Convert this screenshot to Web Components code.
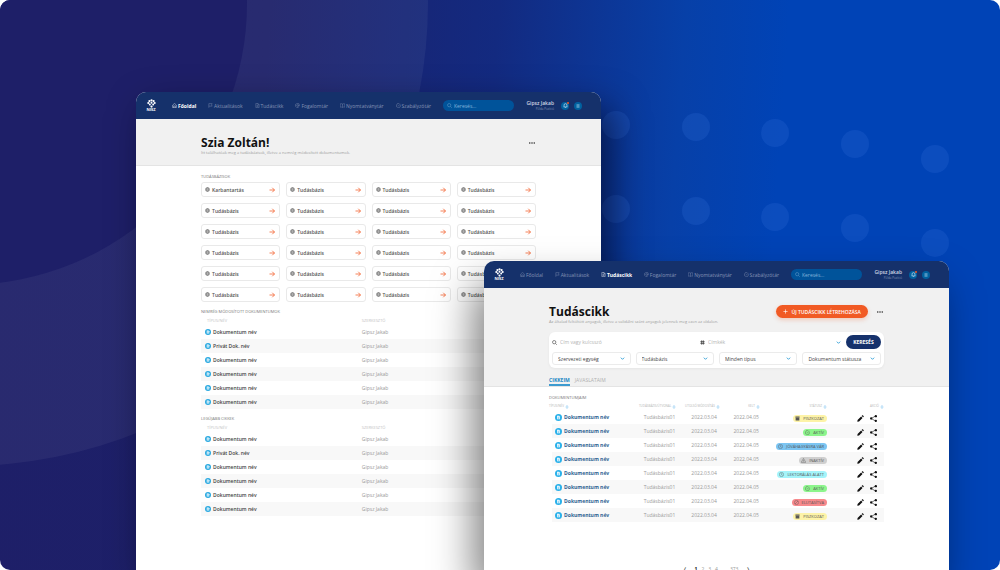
<!DOCTYPE html>
<html lang="hu">
<head>
<meta charset="utf-8">
<meta name="viewport" content="width=device-width, initial-scale=1">
<title>Tudásbázis</title>
<style>
  body {
    margin: 0;
    background: #fff;
    font-family: "Open Sans", "Noto Sans", sans-serif;
    font-size: 5px;
    line-height: 8px;
    color: #555;
  }
</style>
</head>
<body>
<kb-stage>
  <kb-window class="home">
    <kb-header slot="header" current="0"></kb-header>
    <kb-banner slot="banner" heading="Szia Zoltán!" lead="Itt találhatóak meg a tudásbázisok, illetve a nemrég módosított dokumentumok."></kb-banner>
    <kb-section heading="Tudásbázisok"><kb-cards></kb-cards></kb-section>
    <kb-section heading="Nemrég módosított dokumentumok"><kb-documents></kb-documents></kb-section>
    <kb-section heading="Legújabb cikkek"><kb-documents></kb-documents></kb-section>
  </kb-window>
  <kb-window class="articles">
    <kb-header slot="header" current="2"></kb-header>
    <kb-banner slot="banner" heading="Tudáscikk" lead="Az általad feltöltött anyagok, illetve a validálni szánt anyagok jelennek meg ezen az oldalon." action="Új tudáscikk létrehozása">
      <kb-filter></kb-filter>
      <kb-tabs></kb-tabs>
    </kb-banner>
    <kb-section heading="Dokumentumjaim"><kb-articles></kb-articles></kb-section>
    <kb-pager></kb-pager>
  </kb-window>
</kb-stage>

<script>
const icons = {
  logo: `<g fill="currentColor" stroke="none"><circle cx="12" cy="3.500" r="3"/><circle cx="6.500" cy="5.500" r="3"/><circle cx="17.500" cy="5.500" r="3"/><circle cx="3.500" cy="10.500" r="2.800"/><circle cx="20.500" cy="10.500" r="2.800"/><circle cx="12" cy="10" r="2.600"/><circle cx="7.500" cy="14.500" r="2.600"/><circle cx="16.500" cy="14.500" r="2.600"/><circle cx="12" cy="20" r="3"/></g>`,
  home: `<path d="M3 10 12 2l9 8v12H3zM8 22v-8h8v8"/>`,
  flag: `<path d="M4 23V3h16l-3 6 3 6H4"/>`,
  file: `<path d="M4 2h10l6 6v14H4zM14 2v6h6M8 12h8M8 17h8"/>`,
  at: `<circle cx="12" cy="12" r="4"/><path d="M16 8v6c0 3 6 3 6-2a10 10 0 1 0-4 8"/>`,
  book: `<path d="M12 5C9 3 5 3 1 4v16c4-1 8-1 11 1 3-2 7-2 11-1V4c-4-1-8-1-11 1zv16"/>`,
  check: `<path d="M22 10v2a10 10 0 1 1-6-9M22 4 12 14l-4-4"/>`,
  search: `<circle cx="10.500" cy="10.500" r="8"/><path d="m17 17 6 6"/>`,
  bell: `<path d="M5 17V10a7 7 0 0 1 14 0v7l2 2H3zM10 22h4"/>`,
  menu: `<path d="M3 5h18M3 12h18M3 19h18"/>`,
  dots: `<g fill="currentColor" stroke="none"><circle cx="3" cy="12" r="3"/><circle cx="12" cy="12" r="3"/><circle cx="21" cy="12" r="3"/></g>`,
  globe: `<circle cx="12" cy="12" r="10"/><path d="M2 12h20M12 2c-6 6-6 14 0 20M12 2c6 6 6 14 0 20M4 7h16M4 17h16"/>`,
  arrow: `<path d="M2 12h20M13 3l9 9-9 9"/>`,
  doc: `<circle cx="12" cy="12" r="12" fill="currentColor" stroke="none"/><path d="M7 6h7l3 3v9H7z" fill="#fff" stroke="none"/><path d="M9 11h6M9 15h6"/>`,
  plus: `<path d="M12 2v20M2 12h20"/>`,
  chevron: `<path d="m4 8 8 8 8-8"/>`,
  hash: `<path d="M8 2v20M16 2v20M2 8h20M2 16h20"/>`,
  sort: `<path d="m7 8 5-6 5 6zM7 16l5 6 5-6zM7 8v8M17 8v8"/>`,
  box: `<path fill="currentColor" stroke="none" d="M2 2h20v6H2zM3 9h18v13H3z"/>`,
  clock: `<circle cx="12" cy="12" r="10"/><path d="M12 6v7l5 2"/>`,
  warn: `<path d="M12 2 23 21H1zM12 9v6M12 17v2"/>`,
  ban: `<circle cx="12" cy="12" r="10"/><path d="M5 19 19 5"/>`,
  pen: `<path fill="currentColor" stroke="none" d="m1 23 1-6L14 5l5 5L7 22zM16 3l2-2q1-1 2 0l3 3q1 1 0 2l-2 2z"/>`,
  share: `<path d="M20 3 4 12l16 9"/><g fill="currentColor" stroke="none"><circle cx="20" cy="4" r="4"/><circle cx="4" cy="12" r="4"/><circle cx="20" cy="20" r="4"/></g>`,
};

const icon = (name, size = 6, weight = 2) =>
  `<svg class="icon" width="${size}" height="${size}" viewBox="0 0 24 24" fill="none" stroke="currentColor" stroke-width="${weight}" aria-hidden="true">${icons[name]}</svg>`;

const baseStyle = `
  *, *::before, *::after { box-sizing: border-box; }
  :host { display: block; }
  .icon { display: block; flex: none; }
  a { color: inherit; text-decoration: none; }
  button, input, select { font: inherit; color: inherit; border: 0; padding: 0; margin: 0; background: none; min-width: 0; }
  input { outline: none; }
  h1, h2 { margin: 0; }
  table { width: 100%; border-collapse: collapse; table-layout: fixed; }
  th, td { padding: 0; font-weight: 400; text-align: left; white-space: nowrap; }
`;

class KbElement extends HTMLElement {
  connectedCallback() {
    if (this.shadowRoot) return;
    this.attachShadow({ mode: "open" });
    this.shadowRoot.innerHTML = `<style>${baseStyle}${this.styles()}</style>${this.render()}`;
  }
}

class Stage extends KbElement {
  styles() {
    return `
      :host {
        position: relative;
        min-height: 100vh;
        overflow: hidden;
        border-radius: 10px;
        background: linear-gradient(94deg, #1e1f68 0%, #1d2069 26%, #132a80 48%, #0740a8 66%, #0043b6 76%, #0043b6 100%);
      }
      .scene { position: absolute; inset: 0; width: 100%; height: 100%; }
      ::slotted(kb-window) { position: absolute; bottom: 0; width: 46.5%; }
      ::slotted(.home) {
        left: 13.6%;
        top: 92px;
        box-shadow: 10px 16px 36px rgb(0 0 20 / 60%);
      }
      ::slotted(.articles) {
        left: 48.4%;
        top: 261px;
        box-shadow: -10px 24px 40px rgb(0 0 0 / 50%);
      }
    `;
  }
  render() {
    const dots = [[616, 125], [696, 127], [775, 133], [855, 144], [935, 159]]
      .map(([x, y]) => `<circle cx="${x}" cy="${y}" r="14"/><circle cx="${x}" cy="${y + 84}" r="14"/>`)
      .join("");
    return `
      <svg class="scene" viewBox="0 0 1000 570" preserveAspectRatio="xMidYMid slice" aria-hidden="true">
        <circle cx="-35" cy="3" r="463" fill="#fff" fill-opacity=".05"/>
        <circle cx="-35" cy="3" r="282" fill="#1e1f68"/>
        <g fill="#3c78e0" fill-opacity=".2">${dots}</g>
      </svg>
      <slot></slot>`;
  }
}

class Window extends KbElement {
  styles() {
    return `
      :host {
        overflow: hidden;
        border-radius: 10px 10px 0 0;
        background: #fff;
      }
      main { padding: 6px 14% 0; }
    `;
  }
  render() {
    return `
      <slot name="header"></slot>
      <slot name="banner"></slot>
      <main><slot></slot></main>`;
  }
}

class Header extends KbElement {
  styles() {
    return `
      :host { background: #15316b; color: #fff; }
      header { display: flex; align-items: center; height: 27px; padding: 0 19px 0 9px; }
      .logo { display: grid; justify-items: center; width: 12px; margin-right: 15px; font-size: 4px; font-weight: 700; line-height: 4px; }
      nav { flex: 1; display: flex; justify-content: space-between; }
      nav a { display: flex; align-items: center; gap: 1px; color: #8492b4; }
      nav a[aria-current] { color: #fff; font-weight: 700; }
      .search { display: flex; align-items: center; gap: 2px; width: 71px; height: 11px; margin-left: 12px; padding: 0 4px; border-radius: 6px; background: #00539a; color: #82b4da; }
      .search input { flex: 1; }
      .search input::placeholder { color: inherit; opacity: 1; }
      .user { width: 40px; text-align: right; color: #d0d6e4; font-weight: 600; line-height: 7px; }
      .user small { display: block; font-size: 3px; line-height: 5px; font-weight: 400; color: #8492b4; }
      .round { position: relative; display: grid; place-items: center; width: 8px; height: 8px; margin-left: 5px; border-radius: 50%; background: #00619f; color: #d5eefc; }
      .user + .round { margin-left: 7px; }
      .badge { position: absolute; top: 0; right: 0; width: 2px; height: 2px; border-radius: 50%; background: #f15a24; }
    `;
  }
  render() {
    const current = Number(this.getAttribute("current"));
    const links = [
      ["home", "Főoldal"],
      ["flag", "Aktualitások"],
      ["file", "Tudáscikk"],
      ["at", "Fogalomtár"],
      ["book", "Nyomtatványtár"],
      ["check", "Szabályzótár"],
    ];
    return `
      <header>
        <a class="logo" href="#">${icon("logo", 9)}NISZ</a>
        <nav>${links.map(([name, text], i) =>
          `<a href="#"${i === current ? ' aria-current="page"' : ""}>${icon(name, 5)}${text}</a>`).join("")}</nav>
        <label class="search">${icon("search", 5)}<input type="search" placeholder="Keresés..." aria-label="Keresés"></label>
        <div class="user">Gipsz Jakab<small>Példa Pozíció</small></div>
        <button class="round" aria-label="Értesítések">${icon("bell", 5, 3)}<span class="badge"></span></button>
        <button class="round" aria-label="Menü">${icon("menu", 4, 3)}</button>
      </header>`;
  }
}

class Banner extends KbElement {
  styles() {
    return `
      :host { padding: 17px 14% 0; background: #f1f1f1; border-bottom: 1px solid #e4e4e4; }
      :host(:not([action])) { padding-bottom: 2px; }
      .top { display: flex; align-items: center; height: 13px; }
      h1 { flex: 1; font-size: 12px; line-height: 14px; font-weight: 700; color: #111; }
      p { margin: 0 0 6px; font-size: 4px; line-height: 8px; color: #9c9c9c; }
      .more { display: grid; place-items: center; width: 8px; height: 8px; color: #222; }
      .action {
        display: flex;
        align-items: center;
        gap: 4px;
        height: 13px;
        margin-right: 8px;
        padding: 0 7px;
        border-radius: 7px;
        background: #f15a24;
        box-shadow: 0 2px 4px rgb(241 90 36 / 25%);
        color: #fff;
        font-weight: 600;
        text-transform: uppercase;
      }
    `;
  }
  render() {
    const action = this.getAttribute("action");
    return `
      <div class="top">
        <h1>${this.getAttribute("heading")}</h1>
        ${action ? `<button class="action">${icon("plus", 5, 3)}${action}</button>` : ""}
        <button class="more" aria-label="Továbbiak">${icon("dots", 6)}</button>
      </div>
      <p>${this.getAttribute("lead")}</p>
      <slot></slot>`;
  }
}

class Section extends KbElement {
  styles() {
    return `
      :host { margin-bottom: 5px; }
      h2 { font-size: 4px; line-height: 10px; font-weight: 400; text-transform: uppercase; color: #777; }
    `;
  }
  render() {
    return `<h2>${this.getAttribute("heading")}</h2><slot></slot>`;
  }
}

class Cards extends KbElement {
  styles() {
    return `
      :host { display: grid; grid-template-columns: repeat(4, 1fr); gap: 6px; }
      a {
        display: flex;
        align-items: center;
        gap: 2px;
        height: 15px;
        padding: 0 4px 0 3px;
        border: 1px solid #e9e9e9;
        border-radius: 3px;
        font-weight: 600;
        color: #555;
      }
      span { flex: 1; }
      .icon:last-child { color: #f15a24; }
    `;
  }
  render() {
    return Array.from({ length: 24 }, (_, i) =>
      `<a href="#">${icon("globe", 5)}<span>${i ? "Tudásbázis" : "Karbantartás"}</span>${icon("arrow", 6, 3)}</a>`).join("");
  }
}

class Documents extends KbElement {
  styles() {
    return `
      th { height: 8px; padding-left: 6px; font-size: 4px; line-height: 8px; color: #c4c4c4; }
      th + th { padding-left: 0; }
      td { height: 14px; color: #9a9a9a; }
      tbody tr:nth-child(even) { background: #f8f8f8; }
      .name { width: 48%; }
      a { display: flex; align-items: center; gap: 2px; padding-left: 4px; font-weight: 600; color: #444; }
      .icon { color: #29a9e1; }
    `;
  }
  render() {
    const names = ["Dokumentum név", "Privát Dok. név", "Dokumentum név", "Dokumentum név", "Dokumentum név", "Dokumentum név"];
    return `
      <table>
        <thead><tr><th class="name">TÍPUS/NÉV</th><th>SZERKESZTŐ</th></tr></thead>
        <tbody>${names.map((name) =>
          `<tr><td><a href="#">${icon("doc", 6)}${name}</a></td><td>Gipsz Jakab</td></tr>`).join("")}</tbody>
      </table>`;
  }
}

class Filter extends KbElement {
  styles() {
    return `
      form { display: grid; gap: 3px; padding: 3px; border-radius: 6px; background: #fff; box-shadow: 0 1px 3px rgb(0 0 0 / 5%); }
      .fields { display: flex; align-items: center; }
      .field { display: flex; align-items: center; gap: 3px; color: #444; }
      .field:first-child { width: 148px; }
      .tags { flex: 1; padding-right: 5px; }
      input { flex: 1; }
      input::placeholder { color: #b5b5b5; opacity: 1; }
      .submit { width: 35px; height: 14px; border-radius: 7px; background: #15316b; color: #fff; font-weight: 700; }
      .selects { display: grid; grid-template-columns: repeat(4, 1fr); gap: 5px; }
      .select { display: grid; align-items: center; }
      .select > * { grid-area: 1 / 1; }
      .select .icon { justify-self: end; margin-right: 6px; pointer-events: none; }
      select { appearance: none; width: 100%; height: 13px; padding: 0 5px; border: 1px solid #ebebeb; border-radius: 3px; color: #444; }
      .tags .icon:last-child, .select .icon { color: #1b95d2; }
    `;
  }
  render() {
    const options = ["Szervezeti egység", "Tudásbázis", "Minden típus", "Dokumentum státusza"];
    return `
      <form>
        <div class="fields">
          <label class="field">${icon("search", 5, 3)}<input placeholder="Cím vagy kulcsszó" aria-label="Cím vagy kulcsszó"></label>
          <label class="field tags">${icon("hash", 5, 4)}<input placeholder="Címkék" aria-label="Címkék">${icon("chevron", 5, 4)}</label>
          <button class="submit" type="button">KERESÉS</button>
        </div>
        <div class="selects">${options.map((text) =>
          `<label class="select"><select aria-label="${text}"><option>${text}</option></select>${icon("chevron", 5, 4)}</label>`).join("")}</div>
      </form>`;
  }
}

class Tabs extends KbElement {
  styles() {
    return `
      nav { display: flex; gap: 5px; padding-top: 6px; }
      a { height: 12px; line-height: 12px; color: #b0b0b0; }
      a[aria-current] { border-bottom: 2px solid #3d9bd0; font-weight: 700; color: #1b87c4; }
    `;
  }
  render() {
    return `<nav><a href="#" aria-current="page">CIKKEIM</a><a href="#">JAVASLATAIM</a></nav>`;
  }
}

class Status extends KbElement {
  styles() {
    return `
      :host {
        display: inline-flex;
        align-items: center;
        gap: 3px;
        height: 7px;
        padding: 0 3px 0 2px;
        border-radius: 4px;
        background: #fdf3a7;
        font-size: 4px;
        line-height: 7px;
        color: #555;
        vertical-align: middle;
      }
      :host([type="active"]) { background: #8cf58c; }
      :host([type="waiting"]) { background: #7cc5f2; }
      :host([type="inactive"]) { background: #cfcfcf; }
      :host([type="review"]) { background: #a4f4fa; }
      :host([type="rejected"]) { background: #f7898c; }
    `;
  }
  render() {
    const marks = { draft: "box", active: "check", waiting: "clock", inactive: "warn", review: "clock", rejected: "ban" };
    return `${icon(marks[this.getAttribute("type")], 5)}<slot></slot>`;
  }
}

class Articles extends KbElement {
  styles() {
    return `
      th { height: 7px; font-size: 3px; line-height: 7px; color: #b5b5b5; }
      th span { display: flex; align-items: center; justify-content: flex-end; gap: 1px; }
      th:first-child span { justify-content: flex-start; }
      th .icon { color: #6cbcf0; }
      td { height: 14px; color: #9a9a9a; text-align: right; }
      tbody tr:nth-child(even) { background: linear-gradient(#f8f8f8, #f8f8f8) 3px 0 no-repeat; }
      th:nth-child(1) { width: 24%; }
      th:nth-child(2) { width: 14%; }
      th:nth-child(3) { width: 13%; }
      th:nth-child(4) { width: 12%; }
      th:nth-child(5) { width: 20%; }
      td:nth-child(2), td:nth-child(4) { padding-right: 1px; }
      td:nth-child(3) { padding-right: 3px; }
      td:nth-child(5), td:nth-child(6) { padding-top: 2px; }
      a { display: flex; align-items: center; gap: 2px; padding-left: 6px; font-weight: 700; color: #2d6191; }
      a .icon { color: #29b0ea; }
      .actions { display: flex; justify-content: flex-end; gap: 6px; padding-right: 7px; color: #111; }
    `;
  }
  render() {
    const heads = ["TÍPUS/NÉV", "TUDÁSBÁZIS/ÚTVONAL", "UTOLSÓ MÓDOSÍTÁS", "KELT", "STÁTUSZ", "AKCIÓ"];
    const rows = [
      ["draft", "PISZKOZAT"],
      ["active", "AKTÍV"],
      ["waiting", "JÓVÁHAGYÁSRA VÁR"],
      ["inactive", "INAKTÍV"],
      ["review", "LEKTORÁLÁS ALATT"],
      ["active", "AKTÍV"],
      ["rejected", "ELUTASÍTVA"],
      ["draft", "PISZKOZAT"],
    ];
    return `
      <table>
        <thead><tr>${heads.map((text) => `<th><span>${text}${icon("sort", 4)}</span></th>`).join("")}</tr></thead>
        <tbody>${rows.map(([type, text]) => `
          <tr>
            <td><a href="#">${icon("doc", 7)}Dokumentum név</a></td>
            <td>Tudásbázis01</td>
            <td>2022.03.04</td>
            <td>2022.04.05</td>
            <td><kb-status type="${type}">${text}</kb-status></td>
            <td><div class="actions"><button aria-label="Szerkesztés">${icon("pen", 7)}</button><button aria-label="Megosztás">${icon("share", 7)}</button></div></td>
          </tr>`).join("")}</tbody>
      </table>`;
  }
}

class Pager extends KbElement {
  styles() {
    return `
      nav { display: flex; justify-content: center; gap: 4px; padding-top: 38px; line-height: 8px; color: #999; }
      [aria-current] { font-weight: 700; color: #222; }
      .step { color: #444; padding: 0 4px; }
    `;
  }
  render() {
    return `
      <nav aria-label="Lapozás">
        <a class="step" href="#">❬</a><a href="#" aria-current="page">1</a><a href="#">2</a><a href="#">3</a><a href="#">4</a><span>...</span><a href="#">373</a><a class="step" href="#">❭</a>
      </nav>`;
  }
}

customElements.define("kb-stage", Stage);
customElements.define("kb-window", Window);
customElements.define("kb-header", Header);
customElements.define("kb-banner", Banner);
customElements.define("kb-section", Section);
customElements.define("kb-cards", Cards);
customElements.define("kb-documents", Documents);
customElements.define("kb-filter", Filter);
customElements.define("kb-tabs", Tabs);
customElements.define("kb-status", Status);
customElements.define("kb-articles", Articles);
customElements.define("kb-pager", Pager);
</script>
</body>
</html>
